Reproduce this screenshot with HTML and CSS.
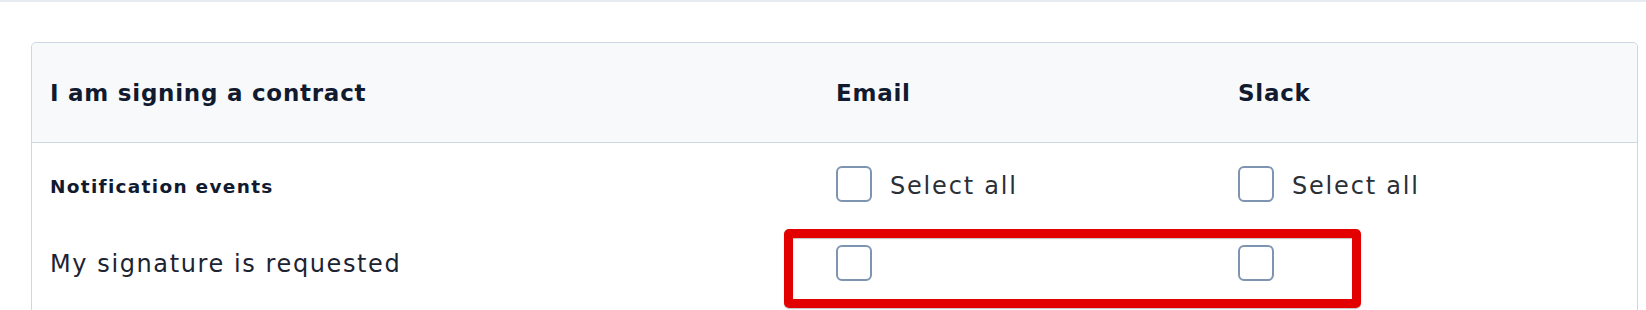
FILE: index.html
```html
<!DOCTYPE html>
<html lang="en">
<head>
<meta charset="utf-8">
<title>Notification settings</title>
<link rel="stylesheet" href="styles.css">
</head>
<body>
<div class="topbar"></div>
<main class="page">
  <section class="card">
    <div class="row head">
      <div class="cell title">I am signing a contract</div>
      <div class="cell title">Email</div>
      <div class="cell title">Slack</div>
    </div>
    <div class="row events">
      <div class="cell sub">Notification events</div>
      <div class="cell"><label class="check"><span class="box"></span><span class="check-text">Select all</span></label></div>
      <div class="cell"><label class="check"><span class="box"></span><span class="check-text">Select all</span></label></div>
    </div>
    <div class="row item">
      <div class="cell label">My signature is requested</div>
      <div class="cell"><span class="box"></span></div>
      <div class="cell"><span class="box"></span></div>
      <div class="highlight"></div>
    </div>
  </section>
</main>
</body>
</html>
```
FILE: styles.css
```css
html, body {
  margin: 0;
  padding: 0;
  background: #ffffff;
  font-family: "DejaVu Sans", "Inter", "Liberation Sans", sans-serif;
  color: #1c2331;
  overflow: hidden;
}
.topbar {
  height: 0;
  border-bottom: 2px solid #e6eaf1;
}
.page {
  padding: 40px 8px 0 31px;
}
.card {
  border: 1.5px solid #cdd6e2;
  border-radius: 5px;
  background: #fff;
  min-height: 400px;
}
.row {
  display: grid;
  grid-template-columns: 786px 402px 1fr;
  align-items: center;
  position: relative;
}
.cell {
  padding: 0 18px;
  white-space: nowrap;
}
.head {
  height: 99px;
  background: #f8f9fb;
  border-bottom: 1.5px solid #cdd6e2;
  border-radius: 5px 5px 0 0;
}
.title {
  font-size: 23px;
  font-weight: 700;
  letter-spacing: 0.75px;
  color: #111a2e;
}
.events {
  height: 80px;
  padding-top: 2px;
  box-sizing: border-box;
}
.item {
  height: 80px;
}
.sub {
  font-size: 18.5px;
  font-weight: 700;
  letter-spacing: 1.3px;
  color: #111a2e;
  padding-top: 4px;
}
.label {
  font-size: 24px;
  letter-spacing: 1.6px;
  color: #1c2331;
  padding-top: 1px;
}
.check {
  display: flex;
  align-items: center;
  gap: 18px;
  font-size: 24px;
  letter-spacing: 1.8px;
  color: #2b2f36;
}
.check-text {
  padding-top: 3px;
}
.box {
  display: block;
  width: 32px;
  height: 32px;
  border: 2px solid #7d95b0;
  border-radius: 6px;
  background: #fff;
}
.highlight {
  position: absolute;
  left: 752px;
  top: 6px;
  width: 559px;
  height: 61px;
  border: 9px solid #e30000;
  border-radius: 5px;
  box-shadow: 0 1px 1px rgba(0,0,0,0.25), inset 0 1px 1px rgba(0,0,0,0.25);
}
```
